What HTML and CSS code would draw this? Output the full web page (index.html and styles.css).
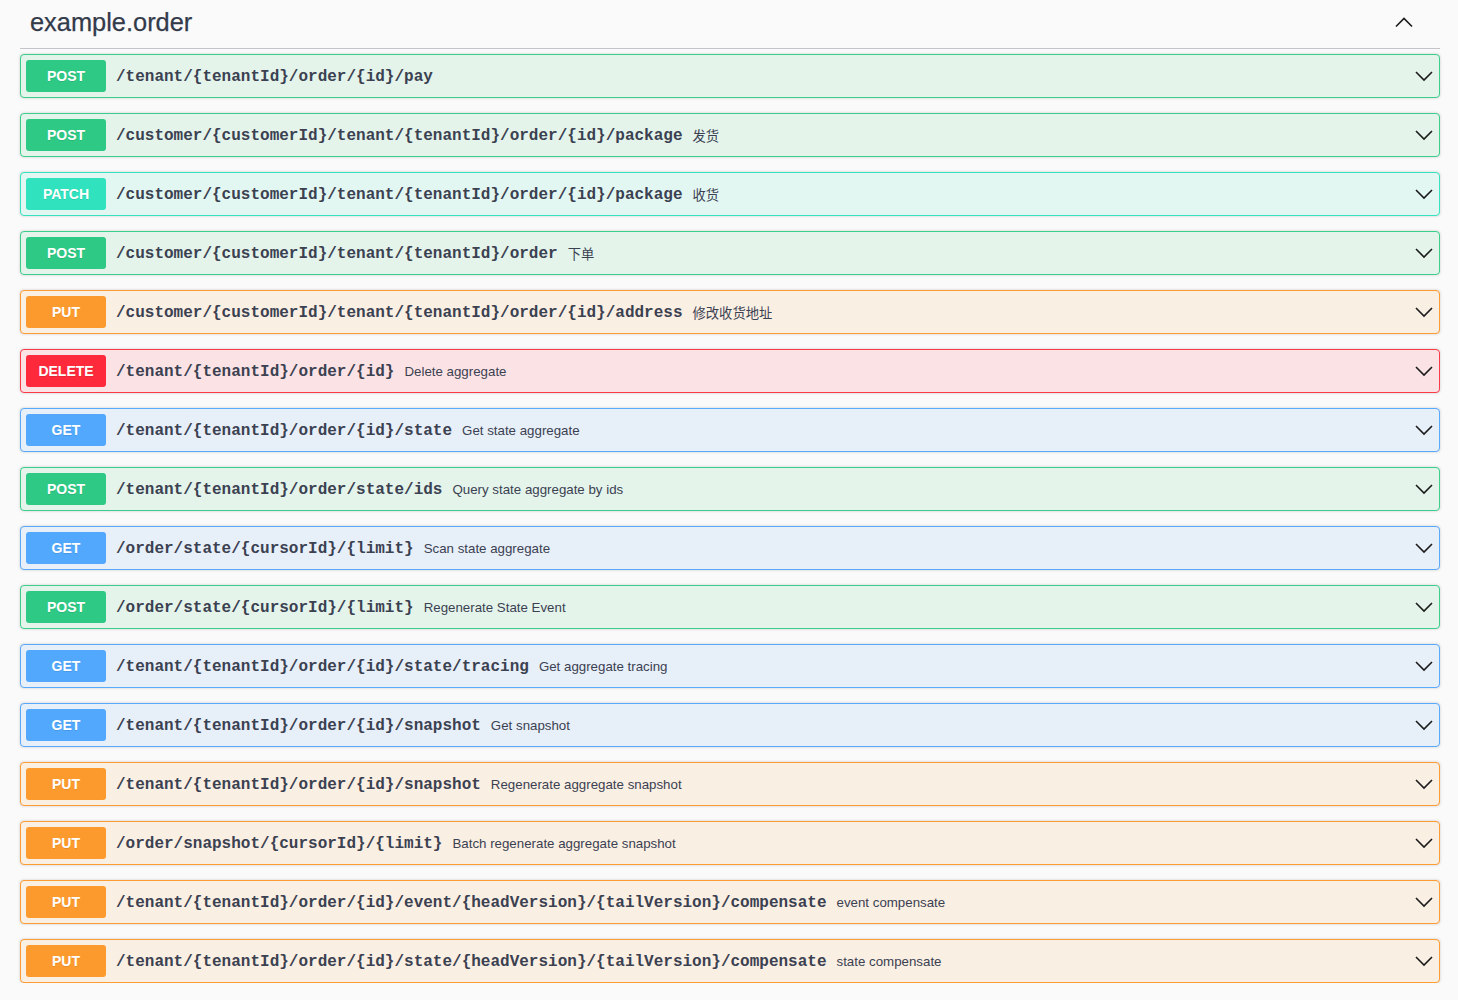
FILE: index.html
```html
<!DOCTYPE html>
<html lang="en">
<head>
<meta charset="utf-8">
<title>example.order</title>
<link rel="stylesheet" href="styles.css">
</head>
<body>
<div class="tag-section">
  <div class="tag-header">
    <h3 class="tag-title">example.order</h3>
    <svg class="arrow arrow-up" width="20" height="20" viewBox="0 0 20 20"><path d="M2 14.5 L10 6.5 L18 14.5"/></svg>
  </div>
  <div class="ops">
    <div class="op op-post"><span class="method">POST</span><span class="path">/tenant/{tenantId}/order/{id}/pay</span><span class="desc"></span><svg class="arrow" width="20" height="20" viewBox="0 0 20 20"><path d="M2 6 L10 14 L18 6"/></svg></div>
    <div class="op op-post"><span class="method">POST</span><span class="path">/customer/{customerId}/tenant/{tenantId}/order/{id}/package</span><span class="desc">发货</span><svg class="arrow" width="20" height="20" viewBox="0 0 20 20"><path d="M2 6 L10 14 L18 6"/></svg></div>
    <div class="op op-patch"><span class="method">PATCH</span><span class="path">/customer/{customerId}/tenant/{tenantId}/order/{id}/package</span><span class="desc">收货</span><svg class="arrow" width="20" height="20" viewBox="0 0 20 20"><path d="M2 6 L10 14 L18 6"/></svg></div>
    <div class="op op-post"><span class="method">POST</span><span class="path">/customer/{customerId}/tenant/{tenantId}/order</span><span class="desc">下单</span><svg class="arrow" width="20" height="20" viewBox="0 0 20 20"><path d="M2 6 L10 14 L18 6"/></svg></div>
    <div class="op op-put"><span class="method">PUT</span><span class="path">/customer/{customerId}/tenant/{tenantId}/order/{id}/address</span><span class="desc">修改收货地址</span><svg class="arrow" width="20" height="20" viewBox="0 0 20 20"><path d="M2 6 L10 14 L18 6"/></svg></div>
    <div class="op op-delete"><span class="method">DELETE</span><span class="path">/tenant/{tenantId}/order/{id}</span><span class="desc">Delete aggregate</span><svg class="arrow" width="20" height="20" viewBox="0 0 20 20"><path d="M2 6 L10 14 L18 6"/></svg></div>
    <div class="op op-get"><span class="method">GET</span><span class="path">/tenant/{tenantId}/order/{id}/state</span><span class="desc">Get state aggregate</span><svg class="arrow" width="20" height="20" viewBox="0 0 20 20"><path d="M2 6 L10 14 L18 6"/></svg></div>
    <div class="op op-post"><span class="method">POST</span><span class="path">/tenant/{tenantId}/order/state/ids</span><span class="desc">Query state aggregate by ids</span><svg class="arrow" width="20" height="20" viewBox="0 0 20 20"><path d="M2 6 L10 14 L18 6"/></svg></div>
    <div class="op op-get"><span class="method">GET</span><span class="path">/order/state/{cursorId}/{limit}</span><span class="desc">Scan state aggregate</span><svg class="arrow" width="20" height="20" viewBox="0 0 20 20"><path d="M2 6 L10 14 L18 6"/></svg></div>
    <div class="op op-post"><span class="method">POST</span><span class="path">/order/state/{cursorId}/{limit}</span><span class="desc">Regenerate State Event</span><svg class="arrow" width="20" height="20" viewBox="0 0 20 20"><path d="M2 6 L10 14 L18 6"/></svg></div>
    <div class="op op-get"><span class="method">GET</span><span class="path">/tenant/{tenantId}/order/{id}/state/tracing</span><span class="desc">Get aggregate tracing</span><svg class="arrow" width="20" height="20" viewBox="0 0 20 20"><path d="M2 6 L10 14 L18 6"/></svg></div>
    <div class="op op-get"><span class="method">GET</span><span class="path">/tenant/{tenantId}/order/{id}/snapshot</span><span class="desc">Get snapshot</span><svg class="arrow" width="20" height="20" viewBox="0 0 20 20"><path d="M2 6 L10 14 L18 6"/></svg></div>
    <div class="op op-put"><span class="method">PUT</span><span class="path">/tenant/{tenantId}/order/{id}/snapshot</span><span class="desc">Regenerate aggregate snapshot</span><svg class="arrow" width="20" height="20" viewBox="0 0 20 20"><path d="M2 6 L10 14 L18 6"/></svg></div>
    <div class="op op-put"><span class="method">PUT</span><span class="path">/order/snapshot/{cursorId}/{limit}</span><span class="desc">Batch regenerate aggregate snapshot</span><svg class="arrow" width="20" height="20" viewBox="0 0 20 20"><path d="M2 6 L10 14 L18 6"/></svg></div>
    <div class="op op-put"><span class="method">PUT</span><span class="path">/tenant/{tenantId}/order/{id}/event/{headVersion}/{tailVersion}/compensate</span><span class="desc">event compensate</span><svg class="arrow" width="20" height="20" viewBox="0 0 20 20"><path d="M2 6 L10 14 L18 6"/></svg></div>
    <div class="op op-put"><span class="method">PUT</span><span class="path">/tenant/{tenantId}/order/{id}/state/{headVersion}/{tailVersion}/compensate</span><span class="desc">state compensate</span><svg class="arrow" width="20" height="20" viewBox="0 0 20 20"><path d="M2 6 L10 14 L18 6"/></svg></div>
  </div>
</div>
</body>
</html>
```
FILE: styles.css
```css
html, body {
  margin: 0;
  padding: 0;
  background: #fafafa;
}
body {
  font-family: "Liberation Sans", Arial, sans-serif;
  color: #3b4151;
}
.tag-section {
  padding: 0 18px 0 20px;
}
.tag-header {
  display: flex;
  align-items: center;
  height: 48px;
  border-bottom: 1px solid #c4c5ca;
  padding: 0 26px 0 10px;
  margin-bottom: 5px;
}
.tag-title {
  flex: 1;
  margin: 0;
  font-size: 25.4px;
  font-weight: normal;
  line-height: 28px;
  padding-bottom: 4px;
  color: #333a4a;
  -webkit-text-stroke: 0.25px #333a4a;
}
.arrow {
  display: block;
  flex: none;
  fill: none;
  stroke: #1b1b1b;
  stroke-width: 1.6;
}
.arrow-up {
  margin-bottom: 4px;
}
.ops {
  display: flex;
  flex-direction: column;
  gap: 15px;
}
.op {
  display: flex;
  align-items: center;
  padding: 5px 5px 5px 5px;
  border: 1px solid;
  border-radius: 4px;
  box-shadow: 0 0 3px rgba(0, 0, 0, 0.19);
}
.method {
  flex: none;
  width: 80px;
  height: 32px;
  line-height: 32px;
  text-align: center;
  border-radius: 3px;
  color: #fff;
  font-size: 14px;
  font-weight: bold;
  text-shadow: 0 1px 0 rgba(0, 0, 0, 0.1);
}
.path {
  padding: 2px 10px 0;
  font-family: "Liberation Mono", "Courier New", monospace;
  font-size: 16px;
  font-weight: bold;
  color: #3b4151;
  white-space: nowrap;
}
.desc {
  flex: 1;
  font-family: "Liberation Sans", "Noto Sans CJK SC", sans-serif;
  font-size: 13.3px;
  color: #3b4151;
}
.op-post { background: #e4f4eb; border-color: #3ccf8c; }
.op-post .method { background: #2ec985; }
.op-patch { background: #e3f7f2; border-color: #36e2c0; }
.op-patch .method { background: #30e2bd; }
.op-put { background: #faefe3; border-color: #fc9c32; }
.op-put .method { background: #fd9a2e; }
.op-delete { background: #fbe3e5; border-color: #fb3a48; }
.op-delete .method { background: #fe2a3c; }
.op-get { background: #e7eff9; border-color: #5aaafc; }
.op-get .method { background: #51a8fd; }
```
